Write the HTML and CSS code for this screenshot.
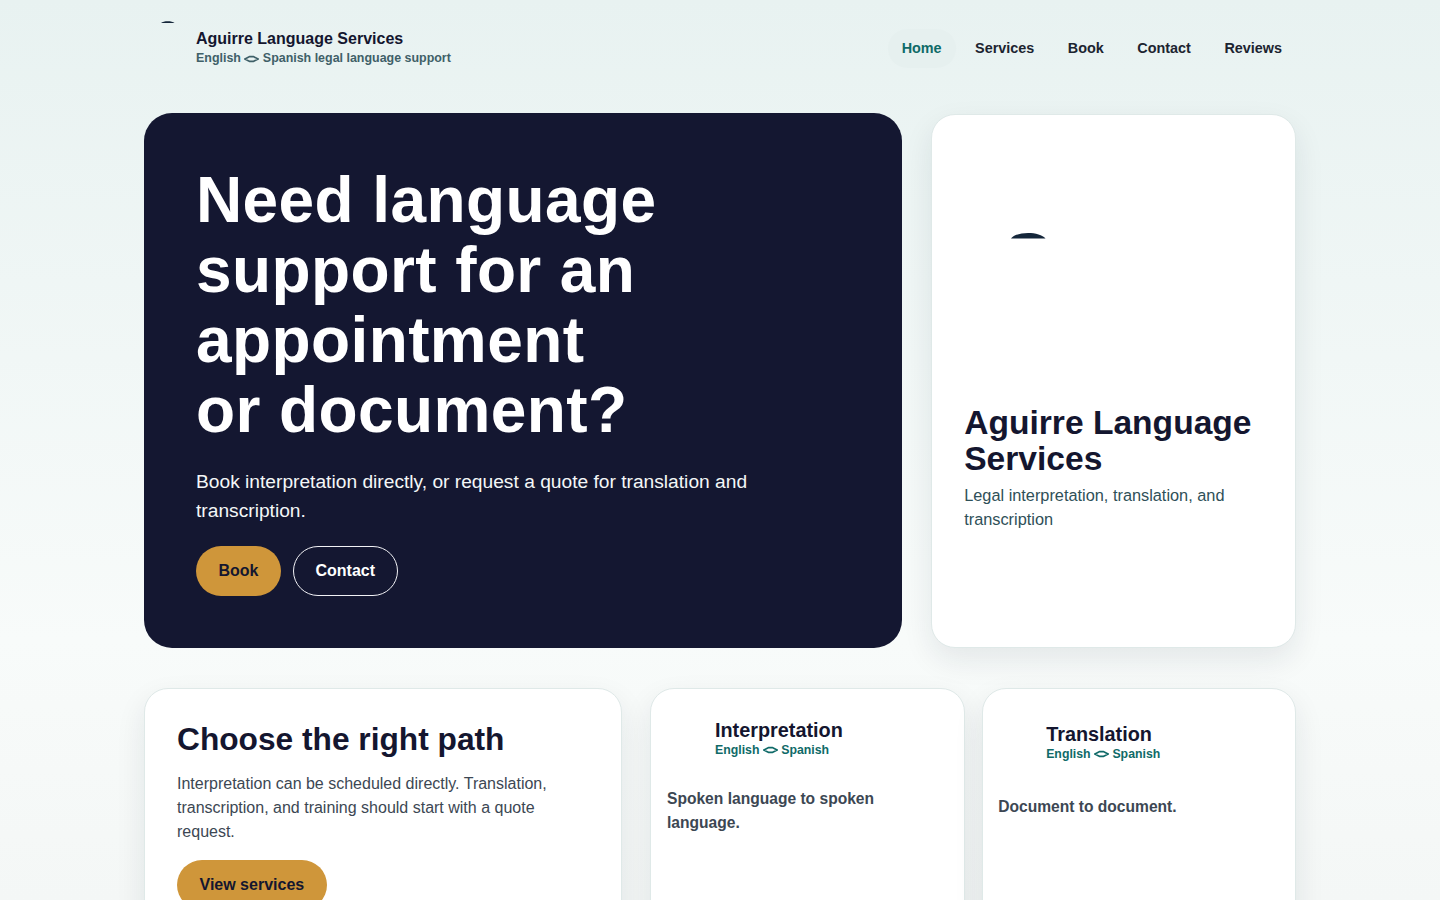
FILE: index.html
```html
<!DOCTYPE html>
<html lang="en">
<head>
<meta charset="utf-8">
<title>Aguirre Language Services</title>
<link rel="stylesheet" href="styles.css">
</head>
<body>
<div class="page">
  <header class="topbar">
    <a class="brand" href="#">
      <svg class="brand-logo" viewBox="0 8 40 48" aria-hidden="true"><path d="M17 7C19.500 4.500 28 4.500 30.500 7Z" fill="#14263a" stroke="none"/></svg>
      <span class="brand-text">
        <strong>Aguirre Language Services</strong>
        <small>English <svg class="swap" viewBox="0 0 16 8" aria-hidden="true"><path d="M1 4 6 1.400h4L15 4l-5 2.600H6Z"/></svg> Spanish legal language support</small>
      </span>
    </a>
    <nav class="nav">
      <a class="nav-link active" href="#">Home</a>
      <a class="nav-link" href="#">Services</a>
      <a class="nav-link" href="#">Book</a>
      <a class="nav-link" href="#">Contact</a>
      <a class="nav-link" href="#">Reviews</a>
    </nav>
  </header>

  <main>
    <section class="hero-grid">
      <div class="hero">
        <h1>Need language support for an appointment<br>or document?</h1>
        <p>Book interpretation directly, or request a quote for translation and transcription.</p>
        <div class="actions">
          <a class="btn btn-gold" href="#">Book</a>
          <a class="btn btn-ghost" href="#">Contact</a>
        </div>
      </div>
      <aside class="profile">
        <div class="profile-pic">
          <svg viewBox="0 0 120 130" aria-hidden="true"><path d="M47 30.500C52 23 76 23 81.500 30.500Z" fill="#14263a"/></svg>
        </div>
        <h2>Aguirre Language Services</h2>
        <p>Legal interpretation, translation, and transcription</p>
      </aside>
    </section>

    <section class="lower-grid">
      <div class="card path">
        <h2>Choose the right path</h2>
        <p>Interpretation can be scheduled directly. Translation, transcription, and training should start with a quote request.</p>
        <a class="btn btn-gold" href="#">View services</a>
      </div>
      <div class="service-grid">
        <div class="card service">
          <div class="service-head">
            <h3>Interpretation</h3>
            <small>English <svg class="swap" viewBox="0 0 16 8" aria-hidden="true"><path d="M1 4 6 1.400h4L15 4l-5 2.600H6Z"/></svg> Spanish</small>
          </div>
          <p>Spoken language to spoken language.</p>
        </div>
        <div class="card service service-alt">
          <div class="service-head">
            <h3>Translation</h3>
            <small>English <svg class="swap" viewBox="0 0 16 8" aria-hidden="true"><path d="M1 4 6 1.400h4L15 4l-5 2.600H6Z"/></svg> Spanish</small>
          </div>
          <p>Document to document.</p>
        </div>
      </div>
    </section>
  </main>
</div>
</body>
</html>
```

FILE: styles.css
```css
* { box-sizing: border-box; }
html, body { margin: 0; padding: 0; }
body {
  font-family: "Liberation Sans", Arial, sans-serif;
  color: #14162f;
  background: linear-gradient(180deg, #e8f2f1 0, #f8fbfa 640px, #f4f7f6 900px);
  background-repeat: no-repeat;
  min-height: 900px;
}
a { text-decoration: none; color: inherit; }
.page { width: 1152px; margin: 0 auto; }

.topbar {
  height: 113px;
  padding-bottom: 17px;
  display: flex;
  align-items: center;
  justify-content: space-between;
}
.brand { display: flex; align-items: center; gap: 12px; }
.brand-logo { width: 40px; height: 48px; display: block; overflow: visible; }
.brand-text { display: flex; flex-direction: column; gap: 1px; margin-top: -1px; }
.brand-text strong { font-size: 16px; line-height: 20px; font-weight: 700; color: #14162f; }
.brand-text small { font-size: 12.440px; line-height: 16px; font-weight: 700; color: #3f6068; }
.swap {
  width: 15px; height: 8px; display: inline-block; vertical-align: -0.5px;
  fill: none; stroke: currentColor; stroke-width: 1.800;
}

.nav { display: flex; gap: 5.500px; }
.nav-link {
  padding: 10px 14px;
  font-size: 14.400px;
  line-height: 19px;
  font-weight: 700;
  color: #1c2430;
  border-radius: 20px;
}
.nav-link.active { color: #0f6a68; background: #e6f0ef; }

.hero-grid { display: grid; grid-template-columns: 758.400px 364.800px; gap: 28.800px; align-items: stretch; }
.hero {
  background: #141731;
  border-radius: 28px;
  height: 535px;
  padding: 51.500px 52px 52px;
  color: #fff;
}
.hero h1 {
  margin: 0;
  max-width: 560px;
  font-size: 64px;
  line-height: 70.200px;
  font-weight: 700;
  letter-spacing: 0.4px;
}
.hero p {
  margin: 21.300px 0 0;
  font-size: 19.200px;
  line-height: 29px;
  color: #f4f7f8;
}
.actions { display: flex; gap: 12px; margin-top: 21.500px; }
.btn {
  display: inline-flex;
  align-items: center;
  justify-content: center;
  height: 50px;
  padding: 0 22.500px;
  border-radius: 25px;
  font-size: 16px;
  font-weight: 700;
}
.btn-gold { background: #cf963a; color: #14162f; }
.btn-ghost { color: #fff; border: 1px solid #f1f1f5; padding: 0 21.500px; }

.profile {
  background: #fff;
  border: 1px solid #dfe9e8;
  border-radius: 24px;
  padding: 0 32px;
  box-shadow: 0 12px 30px rgba(20, 38, 58, 0.09);
  height: 534px;
  margin-top: 1px;
}
.profile-pic { height: 290px; padding-top: 93px; }
.profile-pic svg { width: 120px; height: 130px; display: block; }
.profile h2 {
  margin: 0;
  font-size: 33.600px;
  line-height: 35.500px;
  font-weight: 700;
  color: #14162f;
}
.profile p {
  margin: 6.500px 0 0;
  font-size: 16.320px;
  line-height: 24.500px;
  color: #2f5058;
}

.lower-grid { display: grid; grid-template-columns: 477.600px 645.600px; gap: 28.800px; margin-top: 40px; }
.card {
  background: #fff;
  border: 1px solid #dfe9e8;
  border-radius: 24px;
  box-shadow: 0 12px 30px rgba(20, 38, 58, 0.09);
}
.path { padding: 32.500px 32px 32px; height: 330px; }
.path h2 { margin: 0; font-size: 31.700px; line-height: 35px; font-weight: 700; color: #14162f; }
.path p { margin: 15.500px 0 0; font-size: 16px; line-height: 24px; color: #3c4753; max-width: 400px; }
.path .btn { margin-top: 16px; }

.service-grid { display: grid; grid-template-columns: 314.400px 314.400px; gap: 16.800px; }
.service { padding: 29.500px 16px 20px 15.600px; height: 330px; }
.service-head { padding-left: 48px; display: flex; flex-direction: column; }
.service-head h3 { margin: 0; font-size: 19.840px; line-height: 22px; font-weight: 700; color: #14162f; }
.service-head small { font-size: 12.300px; line-height: 16px; font-weight: 700; color: #0f6a68; margin-top: 1px; }
.service p { margin: 29.500px 0 0; font-size: 15.600px; line-height: 24px; font-weight: 700; color: #3c4753; }
.service-alt { padding-top: 33.500px; }
.service-alt p { margin-top: 33.500px; }
```
